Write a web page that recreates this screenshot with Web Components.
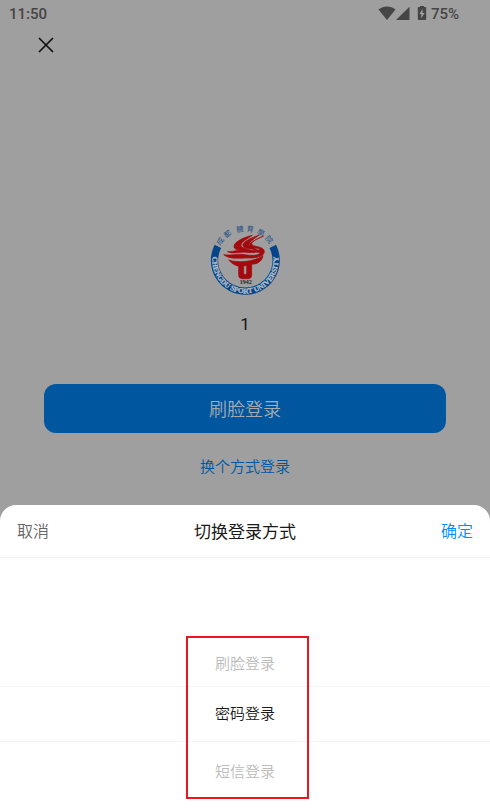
<!DOCTYPE html>
<html lang="zh-CN">
<head>
<meta charset="utf-8">
<meta name="viewport" content="width=device-width, initial-scale=1">
<title>登录</title>
<style>
  body {
    margin: 0;
    font-family: Roboto, "Noto Sans CJK SC", sans-serif;
    font-weight: 350;
    --dim: #9f9f9f;
    --blue-dim: #0057a0;
    --blue: #008cff;
  }
</style>
</head>
<body>
<login-app>
  <status-bar slot="status" time="11:50" battery="75%"></status-bar>
  <login-screen slot="screen">
    <school-crest slot="logo"></school-crest>
    <span slot="account">1</span>
    <span slot="primary">刷脸登录</span>
    <span slot="secondary">换个方式登录</span>
  </login-screen>
  <bottom-sheet slot="sheet">
    <span slot="cancel">取消</span>
    <span slot="title">切换登录方式</span>
    <span slot="confirm">确定</span>
    <method-picker options="刷脸登录,密码登录,短信登录" selected="1"></method-picker>
  </bottom-sheet>
</login-app>

<script>
class LoginApp extends HTMLElement {
  constructor() {
    super()
    this.attachShadow({ mode: 'open' }).innerHTML = `
<style>
  :host {
    display: flex;
    flex-direction: column;
    min-height: 100vh;
    background: var(--dim);
  }
  main { flex: 1; }
</style>
<slot name="status"></slot>
<main><slot name="screen"></slot></main>
<slot name="sheet"></slot>
`
  }
}

class StatusBar extends HTMLElement {
  constructor() {
    super()
    this.attachShadow({ mode: 'open' }).innerHTML = `
<style>
  :host {
    display: flex;
    justify-content: space-between;
    align-items: center;
    height: 28px;
    padding: 0 31px 0 9px;
    color: #454545;
    font-size: 15px;
    font-weight: 500;
  }
  .icons { display: flex; align-items: center; }
  svg { fill: currentColor; display: block; }
  .battery { margin: 0 4px 0 7px; }
</style>
<span data-time></span>
<div class="icons">
  <svg width="18" height="16" viewBox="0 0 18 16"><path d="M.5 3.600C5.500-.4 12.500-.4 17.500 3.600L9 14z"/></svg>
  <svg width="14" height="16" viewBox="0 0 14 16"><path d="M13.500.8V14H0z"/></svg>
  <svg class="battery" width="10" height="16" viewBox="0 0 10 16"><path fill-rule="evenodd" d="M3 0h4V1h1.400c.5 0 .8.3.8.8v11.400c0 .5-.3.8-.8.8H1.600c-.5 0-.8-.3-.8-.8V1.800c0-.5.3-.8.8-.8H3zM5.600 3L2.400 8h1.900v4.200L7.600 7H5.600z"/></svg>
  <span data-battery></span>
</div>
`
  }

  connectedCallback() {
    this.shadowRoot.querySelector('[data-time]').textContent = this.getAttribute('time')
    this.shadowRoot.querySelector('[data-battery]').textContent = this.getAttribute('battery')
  }
}

class SchoolCrest extends HTMLElement {
  constructor() {
    super()
    const angles = [-53, -34, -10, 9, 29, 49]
    const name = [...'成都體育學院'].map((ch, i) =>
      `<text x="137" y="46" transform="rotate(${angles[i]} 137 133)">${ch}</text>`
    ).join('')

    this.attachShadow({ mode: 'open' }).innerHTML = `
<style>
  :host { display: block; }
  svg { display: block; overflow: visible; }
  .name { font: 22px "Noto Sans CJK TC", sans-serif; fill: #244f86; text-anchor: middle; }
  .ring { font: bold 22px "Liberation Serif", serif; fill: #b4bcc4; stroke: #b4bcc4; text-anchor: middle; }
  .year { font: bold 18px "Liberation Serif", serif; fill: #222; text-anchor: middle; }
</style>
<svg width="70" height="72" viewBox="31 24 210 216" role="img" aria-label="成都體育學院">
  <path d="M54.600 91A92.500 92.500 0 1 0 219.400 91" fill="none" stroke="#054488" stroke-width="22"/>
  <path id="arc" d="M47.400 91A99 99 0 1 0 226.600 91" fill="none"/>
  <g class="name">${name}</g>
  <text class="ring"><textPath href="#arc" startOffset="50%">CHENGDU SPORT UNIVERSITY</textPath></text>
  <g fill="#a3090d" stroke="#a3090d" stroke-width="2" stroke-linejoin="round">
    <path d="M158 58C126 66 100 80 103 94C106 107 147 101 165 110C150 96 120 98 124 87C127 77 144 68 158 58Z"/>
    <path d="M178 57C148 68 126 80 130 90C134 101 161 96 176 106C165 91 146 92 149 84C152 75 166 67 178 57Z"/>
    <path d="M192 60C167 70 153 79 157 86C163 93 193 91 194 106C195 124 164 127 139 126C112 127 88 129 72 116C98 120 112 111 137 116C159 120 180 118 180 110C171 106 158 112 137 109C117 106 101 116 83 107C107 107 119 99 140 103C158 106 169 102 182 102C177 96 157 96 151 89C147 78 176 68 192 60Z"/>
    <path d="M87 132C116 142 163 137 190 119C187 139 168 145 156 145V178Q156 188 146 188H127Q117 188 117 178V151Q99 147 87 132ZM132 151V175H141V148Z" fill-rule="evenodd"/>
  </g>
  <text class="year" x="138" y="205">1942</text>
</svg>
`
  }
}

class LoginScreen extends HTMLElement {
  constructor() {
    super()
    this.attachShadow({ mode: 'open' }).innerHTML = `
<style>
  :host {
    display: flex;
    flex-direction: column;
    padding: 8px 44px 20px;
  }
  button { font: inherit; border: 0; padding: 0; cursor: pointer; }
  .close {
    align-self: flex-start;
    margin-left: -7px;
    background: none;
    line-height: 0;
  }
  .profile {
    display: flex;
    flex-direction: column;
    align-items: center;
    gap: 16px;
    margin: 170px 0 48px;
    font-size: 17px;
    font-weight: 400;
    line-height: 24px;
    color: #151515;
  }
  .primary {
    height: 49px;
    padding-bottom: 1px;
    border-radius: 12px;
    background: var(--blue-dim);
    color: #a6abb0;
    font-size: 18px;
  }
  .secondary {
    align-self: center;
    margin-top: 22px;
    color: var(--blue-dim);
    font-size: 15px;
    line-height: 24px;
    text-decoration: none;
  }
</style>
<button class="close" aria-label="关闭">
  <svg width="18" height="18" viewBox="0 0 18 18" fill="none" stroke="#111" stroke-width="1.700"><path d="M2 2l14 14M16 2L2 16"/></svg>
</button>
<div class="profile">
  <slot name="logo"></slot>
  <slot name="account"></slot>
</div>
<button class="primary"><slot name="primary"></slot></button>
<a class="secondary" href="#"><slot name="secondary"></slot></a>
`
  }
}

class BottomSheet extends HTMLElement {
  constructor() {
    super()
    this.attachShadow({ mode: 'open' }).innerHTML = `
<style>
  :host {
    display: block;
    background: #fff;
    border-radius: 16px 16px 0 0;
  }
  header {
    display: flex;
    justify-content: space-between;
    align-items: center;
    height: 50px;
    padding: 0 17px 2px;
    border-bottom: 1px solid #f5f5f5;
  }
  button {
    font: inherit;
    font-size: 16px;
    border: 0;
    padding: 0;
    background: none;
    cursor: pointer;
    color: #666;
  }
  .confirm { color: var(--blue); }
  h1 { margin: 0; font-size: 17px; font-weight: 400; color: #1a1a1a; }
</style>
<header>
  <button><slot name="cancel"></slot></button>
  <h1><slot name="title"></slot></h1>
  <button class="confirm"><slot name="confirm"></slot></button>
</header>
<slot></slot>
`
  }
}

class MethodPicker extends HTMLElement {
  constructor() {
    super()
    this.attachShadow({ mode: 'open' }).innerHTML = `
<style>
  :host {
    display: block;
    position: relative;
    padding: 80px 0 13px;
    font-size: 15px;
  }
  fieldset { border: 0; margin: 0; padding: 0; }
  label {
    display: flex;
    justify-content: center;
    align-items: center;
    box-sizing: border-box;
    height: 48px;
    color: #bbb;
    cursor: pointer;
  }
  label:has(:checked) {
    height: 56px;
    padding-bottom: 3px;
    color: #1a1a1a;
    border: solid #f5f5f5;
    border-width: 1px 0;
  }
  label:last-of-type { height: 56px; }
  input { appearance: none; position: absolute; margin: 0; }
  /* frame drawn over the options */
  .mark {
    position: absolute;
    top: 78px;
    bottom: 12px;
    left: 38%;
    width: 25%;
    box-sizing: border-box;
    border: 2px solid #f0141e;
    pointer-events: none;
  }
</style>
<fieldset aria-label="登录方式"></fieldset>
<div class="mark"></div>
`
  }

  connectedCallback() {
    const selected = Number(this.getAttribute('selected'))
    this.shadowRoot.querySelector('fieldset').innerHTML = this.getAttribute('options').split(',').map((text, i) =>
      `<label><input type="radio" name="method" ${i === selected ? 'checked' : ''}>${text}</label>`
    ).join('')
  }
}

customElements.define('login-app', LoginApp)
customElements.define('status-bar', StatusBar)
customElements.define('school-crest', SchoolCrest)
customElements.define('login-screen', LoginScreen)
customElements.define('bottom-sheet', BottomSheet)
customElements.define('method-picker', MethodPicker)
</script>
</body>
</html>
